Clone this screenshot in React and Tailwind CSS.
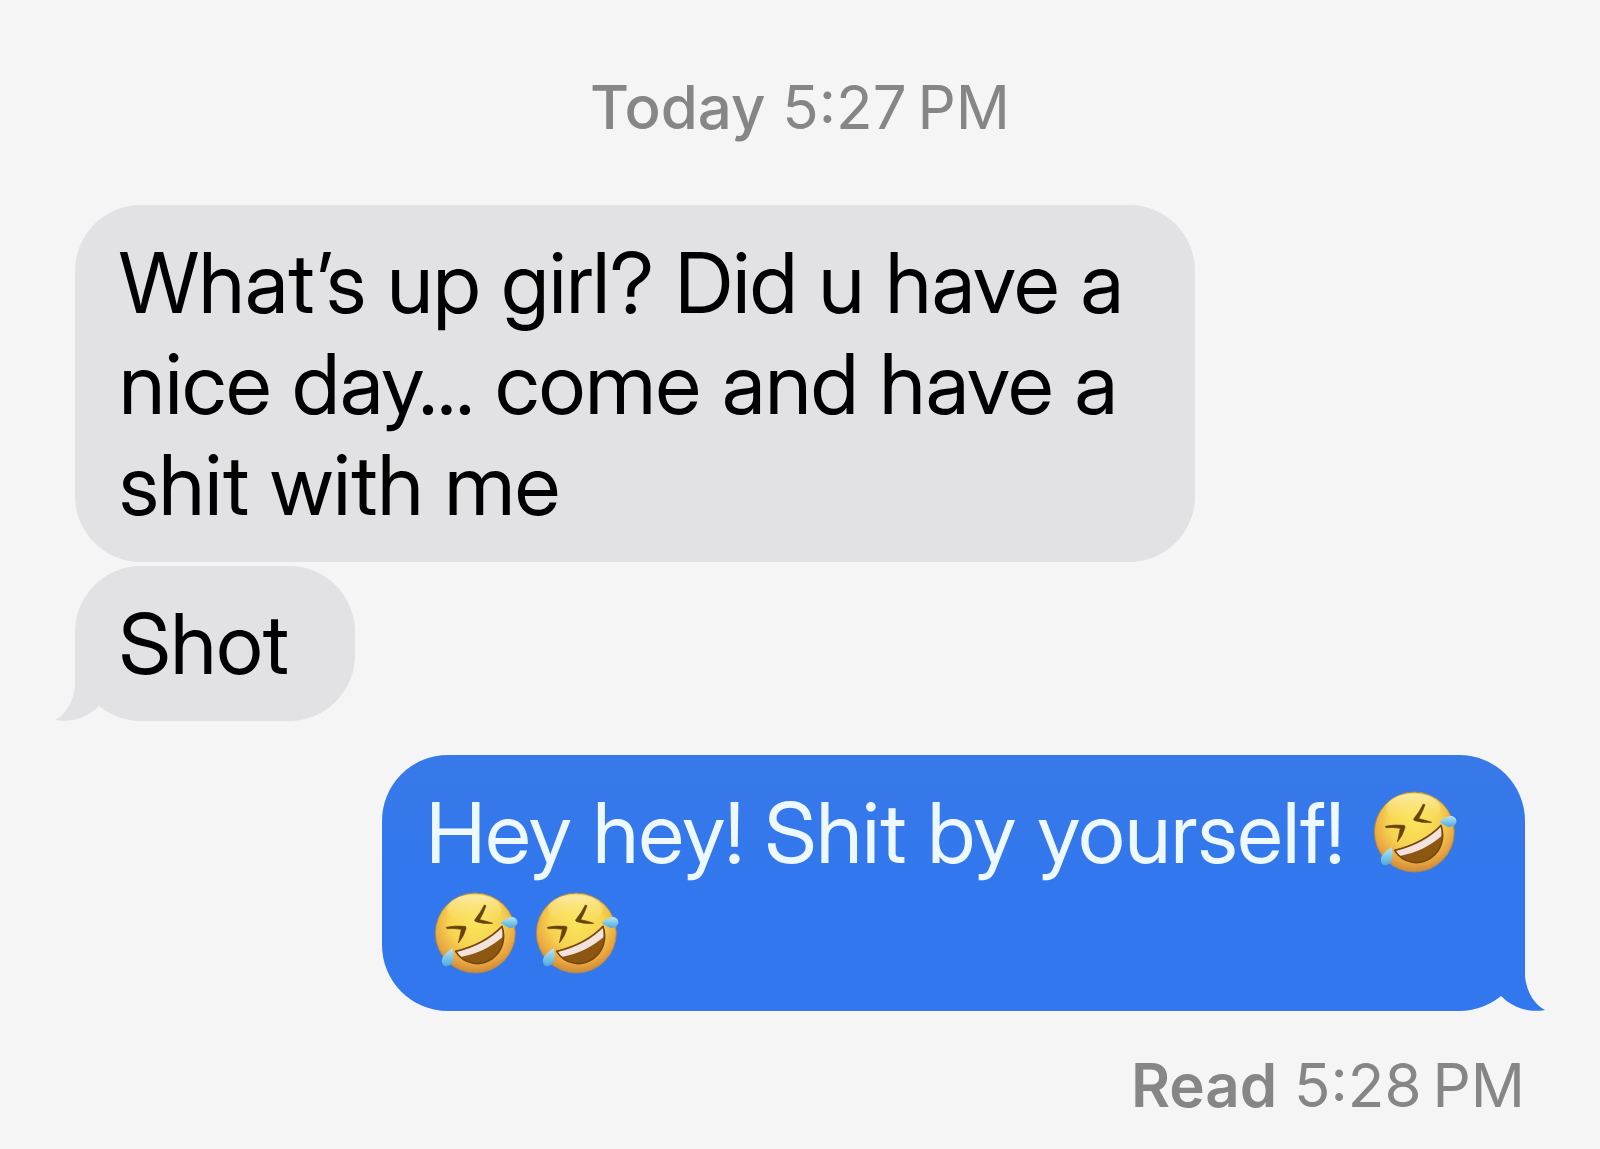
const messages = [
  { id: 1, from: 'them', text: 'What’s up girl? Did u have a nice day... come and have a shit with me' },
  { id: 2, from: 'them', text: 'Shot', tail: true },
  { id: 3, from: 'me', text: 'Hey hey! Shit by yourself!', laughs: 3, tail: true },
]

function Rofl(){
  return (
    <svg viewBox="45 30 264 264" role="img" aria-label="rolling on the floor laughing" className="inline-block size-[88px] ml-1.5 mr-[7px] align-[-14px]">
      <defs>
        <radialGradient id="face" cx="0.5" cy="0.36" r="0.66">
          <stop offset="0" stopColor="#fbe55c" />
          <stop offset="0.5" stopColor="#f6d350" />
          <stop offset="0.8" stopColor="#e9a640" />
          <stop offset="1" stopColor="#c98238" />
        </radialGradient>
        <linearGradient id="shine" x1="0" y1="0" x2="0" y2="1">
          <stop offset="0" stopColor="#fff6cf" stopOpacity="0.7" />
          <stop offset="1" stopColor="#fdeb7a" stopOpacity="0" />
        </linearGradient>
        <linearGradient id="tear" x1="0" y1="0" x2="0" y2="1">
          <stop offset="0" stopColor="#b9e6f3" />
          <stop offset="1" stopColor="#4fa9dc" />
        </linearGradient>
      </defs>
      <circle cx="175" cy="159" r="120" fill="url(#face)" stroke="#a58a52" strokeWidth="3" />
      <ellipse cx="172" cy="88" rx="82" ry="44" fill="url(#shine)" />
      <path d="M202 75Q192 96 173 120Q172 124 177 125Q202 133 227 130Q208 123 188 119Q200 98 207 77Z" fill="#66430b" stroke="#66430b" strokeWidth="2" strokeLinejoin="round" />
      <path d="M88 142Q114 136 144 139Q148 140 147 145Q141 170 124 189Q129 168 133 148Q112 144 90 146Z" fill="#66430b" stroke="#66430b" strokeWidth="2" strokeLinejoin="round" />
      <path d="M116 214C165 202 220 176 255 139C267 178 256 214 226 236C190 262 139 252 116 214Z" fill="#8b5711" />
      <path d="M117 214C165 202 220 176 255 140Q260 158 256 172C222 202 180 222 132 231Q123 225 117 214Z" fill="#f4e2dc" />
      <path d="M116 214C165 202 220 176 255 139C267 178 256 214 226 236C190 262 139 252 116 214Z" fill="none" stroke="#744710" strokeWidth="5" strokeLinejoin="round" />
      <path d="M250 129Q270 109 289 111Q303 117 301 130Q297 144 278 144Q265 140 250 129Z" fill="url(#tear)" />
      <path d="M107 205Q113 230 106 249Q95 263 81 257Q71 249 76 234Q87 216 107 205Z" fill="url(#tear)" />
    </svg>
  )
}

function Tail({ mine }){
  return (
    <svg
      viewBox="0 0 60 68"
      aria-hidden="true"
      className={`absolute bottom-0 h-[68px] w-[60px] ${mine ? '-right-5 -scale-x-100 text-[#3277ee]' : '-left-5 text-[#e2e2e4]'}`}
    >
      <path fill="currentColor" d="M20 0V34C18 50 10 62 0 67C16 70 32 65 44 53L56 40V0Z" />
    </svg>
  )
}

function Bubble({ message }){
  const mine = message.from === 'me'
  return (
    <li
      className={`relative w-fit rounded-[66px] py-[27px] pl-11 text-[84px] leading-[101px] ${
        mine
          ? 'self-end mt-[30px] max-w-[1143px] pr-8 bg-linear-to-b from-[#3879e9] to-[#3277ee] to-50% text-[#eef9ff]'
          : 'max-w-[1120px] pr-[66px] bg-[#e2e2e4] text-black'
      }`}
    >
      {message.tail && <Tail mine={mine} />}
      <p className="relative">
        {message.text}
        {message.laughs && ' '}
        {Array.from({ length: message.laughs || 0 }, (_, i) => <Rofl key={i} />)}
      </p>
    </li>
  )
}

export default function App(){
  return (
    <main className="min-h-screen bg-[#f5f5f6] px-[75px] pt-[71px] pb-6 font-['Inter',sans-serif] text-[60px] leading-[72px] text-[#868687]">
      <p className="text-center">
        <span className="font-medium">Today</span> <time>5:27&#8201;PM</time>
      </p>
      <ul className="mt-[62px] flex flex-col gap-1 font-['Inter_Display','Inter',sans-serif]">
        {messages.map(m => <Bubble key={m.id} message={m} />)}
      </ul>
      <p className="mt-[38px] text-right">
        <span className="font-semibold">Read</span> <time>5:28&#8201;PM</time>
      </p>
    </main>
  )
}
